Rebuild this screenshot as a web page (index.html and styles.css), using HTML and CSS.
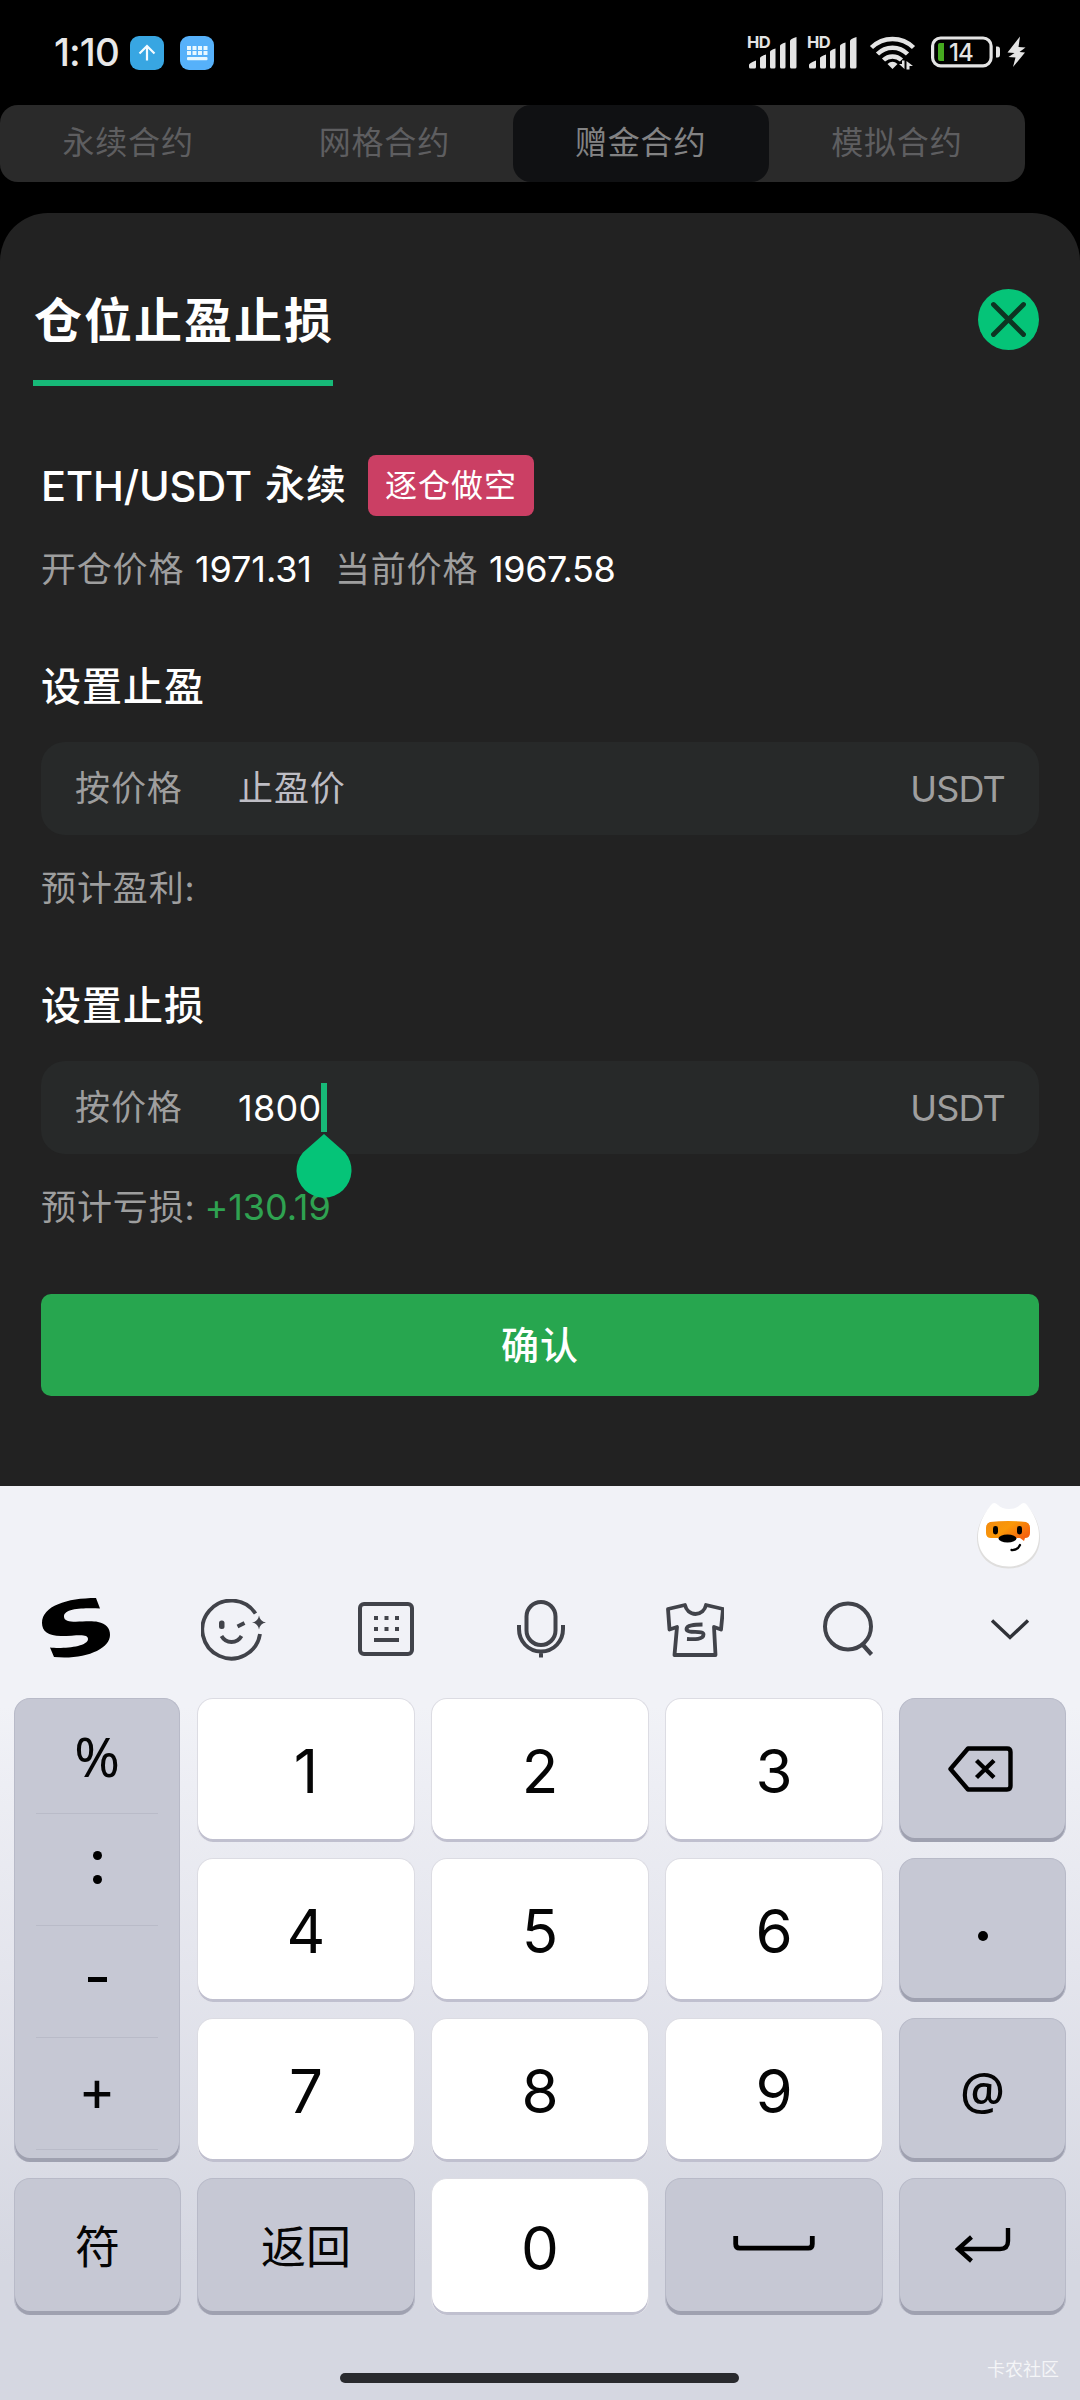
FILE: index.html
```html
<!DOCTYPE html>
<html lang="zh-CN">
<head>
<meta charset="utf-8">
<title>仓位止盈止损</title>
<link rel="stylesheet" href="styles.css">
</head>
<body>
<div class="screen">
  <header class="status">
    <span class="clock">1:10</span>
    <svg class="app-badge" viewBox="0 0 34 34"><rect width="34" height="34" rx="9" fill="#38a6e2"/><path d="M17 24.500V10M9.500 17.500L17 10l7.500 7.500" fill="none" stroke="#f4fbff" stroke-width="2.200"/></svg>
    <svg class="app-badge second" viewBox="0 0 34 34"><rect width="34" height="34" rx="9" fill="#56b1fa"/><g fill="#e8f8ff"><path d="M7 10h4v4H7zM12.500 10h4v4h-4zM18 10h4v4h-4zM23.500 10h4v4h-4zM7 15h4v4H7zM12.500 15h4v4h-4zM18 15h4v4h-4zM23.500 15h4v4h-4z"/><rect x="7" y="21" width="20.500" height="3.200" rx="1"/></g></svg>
    <svg class="indicators" viewBox="0 -4 280 44" fill="#e4e4e4">
      <g>
        <text class="hd" x="0" y="13">HD</text>
        <path d="M2 32v-2q0-2 7-4.500V32q0 1.500-1.500 1.500h-4Q2 33.500 2 32zM13 32V23q0-1.500 6-3.500V32q0 1.500-1.500 1.500h-3Q13 33.500 13 32zM23 32V17q0-2 5.500-3.500V32q0 1.500-1.500 1.500h-2.500Q23 33.500 23 32zM33 32V11q0-2 5.500-3.500V32q0 1.500-1.500 1.500h-2.500Q33 33.500 33 32zM43 32V6q0-2 6.500-4V32q0 1.500-1.500 1.500h-3.500Q43 33.500 43 32z"/>
      </g>
      <g transform="translate(60 0)">
        <text class="hd" x="0" y="13">HD</text>
        <path d="M2 32v-2q0-2 7-4.500V32q0 1.500-1.500 1.500h-4Q2 33.500 2 32zM13 32V23q0-1.500 6-3.500V32q0 1.500-1.500 1.500h-3Q13 33.500 13 32zM23 32V17q0-2 5.500-3.500V32q0 1.500-1.500 1.500h-2.500Q23 33.500 23 32zM33 32V11q0-2 5.500-3.500V32q0 1.500-1.500 1.500h-2.500Q33 33.500 33 32zM43 32V6q0-2 6.500-4V32q0 1.500-1.500 1.500h-3.500Q43 33.500 43 32z"/>
      </g>
      <g fill="none" stroke="#e4e4e4" stroke-width="4.500"><path d="M124.500 12.500a30 30 0 0 1 42 0"/><path d="M130.500 19a21 21 0 0 1 30 0"/><path d="M136.500 25a13 13 0 0 1 18 0"/></g>
      <path d="M145.500 34l-5-5q5-4.500 10 0z"/>
      <path d="M155 25.500h2.500V34L152 29h3zM159.500 34.500V26l6.500 5h-3.500v3.500z"/>
      <rect x="185.600" y="3" width="58.500" height="27.800" rx="8" fill="none" stroke="#e4e4e4" stroke-width="3.200"/>
      <path d="M249 11.500h1.500q2.500 0 2.500 3v5q0 3-2.500 3H249z"/>
      <path d="M193 8h4v18h-4q-2 0-2-2V10q0-2 2-2z" fill="#45a91f"/>
      <text class="percent" x="202" y="26">14</text>
      <path d="M273 1.500L260.500 17.500l7 .500-6 4 7 .500L266 32 278 17.500l-5.500-.500 6-4.500-7-.500z"/>
    </svg>
  </header>

  <nav class="tabs"><span>永续合约</span><span>网格合约</span><span class="active">赠金合约</span><span>模拟合约</span></nav>

  <main class="sheet">
    <div class="sheet-head">
      <h1>仓位止盈止损</h1>
      <svg class="close" viewBox="0 0 61 61"><circle cx="30.500" cy="30.500" r="30.500" fill="#05c478"/><path d="M15.500 15.500l30 30M45.500 15.500l-30 30" stroke="#0d3422" stroke-width="4.900" stroke-linecap="round"/></svg>
    </div>
    <div class="pair"><span class="symbol">ETH/USDT</span><span class="perp">永续</span><span class="side">逐仓做空</span></div>
    <div class="prices"><span class="muted">开仓价格</span><b class="open">1971.31</b><span class="muted">当前价格</span><b>1967.58</b></div>

    <section class="take">
      <h2>设置止盈</h2>
      <div class="field"><span class="mode">按价格</span><span class="placeholder">止盈价</span><span class="unit">USDT</span></div>
      <p class="estimate">预计盈利:</p>
    </section>

    <section class="stop">
      <h2>设置止损</h2>
      <div class="field"><span class="mode">按价格</span><span class="value">1800<i class="caret"></i><svg class="handle" viewBox="0 0 56 66"><path d="M28 1L49 19.500A27.500 27.500 0 1 1 7 19.500z" fill="#05c478"/></svg></span><span class="unit">USDT</span></div>
      <p class="estimate">预计亏损:<span class="gain">+130.19</span></p>
    </section>
    <button class="confirm">确认</button>
  </main>

  <footer class="keyboard">
    <div class="assistant">
      <svg class="mascot" viewBox="0 0 70 76">
        <defs>
          <linearGradient id="mask" x1="0" y1="0" x2="1" y2=".6"><stop offset="0" stop-color="#f28a10"/><stop offset=".5" stop-color="#fa9808"/><stop offset="1" stop-color="#f4620e"/></linearGradient>
        </defs>
        <path d="M18 5q3-4 7 0 4 4 11 4t11-4q4-4 7 0c9 10 13 21 13 32C67 56 53 67.500 35.500 67.500S4 56 4 37C4 26 9 15 18 5z" fill="#dfdedd"/>
        <path d="M18 4q3-4 7 0 4 4 11 4t11-4q4-4 7 0c8 10 12 21 12 31C66 54 52 65.500 35.500 65.500S5 54 5 36C5 25 10 14 18 4z" fill="#fff"/>
        <path d="M17 21q18-2 36 0 4 1 4 6v5q0 5-5 5l-1 3-4-3H18q-5 0-5-5v-5q0-5 4-6z" fill="url(#mask)"/>
        <rect x="20" y="25" width="5" height="8.500" rx="2.400"/><rect x="44" y="25" width="5" height="8.500" rx="2.400"/>
        <ellipse cx="34.500" cy="37.500" rx="9" ry="4"/><path d="M38.500 49q6 .5 8.500-5" fill="none" stroke="#000" stroke-width="2.300" stroke-linecap="round"/>
      </svg>
    </div>
    <div class="toolbar">
      <svg class="t-logo" viewBox="0 0 68 60"><path d="M54 0l4 10.500C43 10 22 10 22 18.500c0 9 22 3 34 5.500 8 1.700 12 6 12 13C68 51 43 62 12 59L8 49.500C20 51 46 49 46 41c0-6-12-3-27-3C6 38 0 33 0 25 0 8 25 0 54 0z"/></svg>
      <svg class="t-smile" viewBox="0 0 66 62"><g fill="none" stroke="#41434a" stroke-width="3.800"><path d="M54.500 14.500A29 29 0 1 0 59 35"/><path d="M20.500 37c4.500 8 15.500 8 20 0"/></g><rect x="18" y="21.500" width="5.500" height="8.500" rx="2.500" fill="#41434a"/><path d="M36.500 27.500l7-3.500" stroke="#41434a" stroke-width="4"/><path d="M58 16.500q1 6 7 7-6 1-7 7-1-6-7-7 6-1 7-7z" fill="#41434a"/></svg>
      <svg class="t-keys" viewBox="0 0 56 54"><rect x="2" y="2" width="52" height="50" rx="4" fill="none" stroke="#41434a" stroke-width="4"/><path d="M16 14h4v4h-4zM26.500 14h4v4h-4zM37 14h4v4h-4zM16 25h4v4h-4zM26.500 25h4v4h-4zM37 25h4v4h-4zM16 36h25v4H16z" fill="#41434a"/></svg>
      <svg class="t-mic" viewBox="0 0 48 58"><g fill="none" stroke="#41434a" stroke-width="4"><rect x="9.500" y="2" width="29" height="43" rx="14.500"/><path d="M2 25v4c0 12 9 22.500 22 22.500S46 41 46 29v-4M24 51v6.500"/></g></svg>
      <svg class="t-shirt" viewBox="0 0 58 54"><g fill="none" stroke="#41434a" stroke-width="3.800" stroke-linejoin="round"><path d="M19 2L2 6l1.500 20.500L11 24 8.500 52h41L48 24l7 2.500L57 6 40 2c-1 5-5 9-10.500 9S20 7 19 2z"/><path d="M36.500 21.500c-8 0-16 .5-16 4.500 0 5 17 1 17 5.500 0 5-9 5-16.500 4.500"/></g></svg>
      <svg class="t-search" viewBox="0 0 52 56"><g fill="none" stroke="#41434a" stroke-width="4"><circle cx="25" cy="25.500" r="23"/><path d="M40 44l8.500 9.500" stroke-width="4.200"/></g></svg>
      <svg class="t-down" viewBox="0 0 40 24"><path d="M2 2.500l18 17 18-17" fill="none" stroke="#303238" stroke-width="3.400"/></svg>
    </div>
    <div class="keys">
      <div class="symbols key gray"><span class="pct">%</span><span class="colon"><i></i><i></i></span><span class="minus"><i></i></span><span class="plus">+</span></div>
      <div class="key">1</div><div class="key">2</div><div class="key">3</div>
      <div class="key gray"><svg class="backspace" viewBox="0 0 65 46"><path d="M20 2.500h39q3.500 0 3.500 3.500v34q0 3.500-3.500 3.500H20L2.500 23z" fill="none" stroke="#000" stroke-width="4.400" stroke-linejoin="round"/><path d="M28.500 14.500L46 31.500M46 14.500L28.500 31.500" stroke="#000" stroke-width="4.400"/></svg></div>
      <div class="key">4</div><div class="key">5</div><div class="key">6</div><div class="key gray"><i class="point"></i></div>
      <div class="key">7</div><div class="key">8</div><div class="key">9</div><div class="key gray at">@</div>
      <div class="key gray han">符</div><div class="key gray han">返回</div><div class="key">0</div>
      <div class="key gray"><svg class="space" viewBox="0 0 82 15"><path d="M2.700 0v8q0 4.200 4 4.200h68.600q4 0 4-4.200V0" fill="none" stroke="#000" stroke-width="4.800"/></svg></div>
      <div class="key gray"><svg class="enter" viewBox="0 0 56 36"><path d="M53 0v13q0 8-8 8H3M16.500 9L3 21l13.500 12" fill="none" stroke="#000" stroke-width="4.400"/></svg></div>
    </div>
    <div class="home"></div>
    <span class="watermark">卡农社区</span>
  </footer>
</div>
</body>
</html>
```
FILE: styles.css
```css
* { box-sizing: border-box; }
body { margin: 0; background: #000; font-family: Inter, "Noto Sans CJK SC", sans-serif; }
svg { display: block; flex: none; }
h1, h2, p { margin: 0; }
.screen { width: 1080px; height: 2400px; display: flex; flex-direction: column; overflow: hidden; }

.status { height: 105px; display: flex; align-items: center; padding-left: 54px; }
.clock { width: 76px; font-size: 38.500px; font-weight: 500; line-height: 105px; letter-spacing: -.900px; color: #e8e8e8; white-space: nowrap; }
.app-badge { width: 34px; height: 34px; }
.app-badge.second { margin-left: 16px; }
.indicators { width: 280px; height: 44px; margin-left: 533px; overflow: visible; }
.hd { font-size: 16.500px; font-weight: 700; letter-spacing: -.5px; }
.percent { font-size: 24px; font-weight: 500; letter-spacing: -1px; }

.tabs { display: grid; grid-template-columns: repeat(4, 1fr); width: 1025px; height: 77px; border-radius: 18px; background: #2a2a2a; overflow: hidden; }
.tabs span { text-align: center; font-size: 32px; letter-spacing: .8px; line-height: 75px; color: #5e5e60; }
.tabs .active { background: #101113; border-radius: 18px; color: #838384; }

.sheet { margin-top: 31px; height: 1273px; flex: none; padding: 63px 41px 0; border-radius: 48px 48px 0 0; background: #222; color: #fff; }
.sheet-head { display: flex; justify-content: space-between; margin-left: -8px; height: 110px; }
h1 { height: 110px; width: 300px; border-bottom: 6px solid #17b978; font-size: 48px; font-weight: 700; line-height: 89px; letter-spacing: 2px; white-space: nowrap; padding-left: 1px; }
.close { width: 61px; height: 61px; margin-top: 13px; }
.pair { display: flex; align-items: center; height: 61px; margin-top: 69px; white-space: nowrap; }
.symbol { width: 224px; font-size: 41.500px; font-weight: 500; letter-spacing: -.1px; }
.perp { width: 103px; font-size: 40px; font-weight: 500; line-height: 61px; height: 63px; letter-spacing: 1px; }
.side { width: 166px; height: 61px; border-radius: 8px; background: #cb3f64; text-align: center; font-size: 32px; letter-spacing: 1px; line-height: 61px; }
.prices { display: flex; height: 50px; margin-top: 28px; line-height: 50px; font-size: 35px; letter-spacing: .8px; white-space: nowrap; }
.prices span { width: 153px; }
.prices b { margin-left: 1px; font-size: 36px; font-weight: 400; letter-spacing: -.4px; }
.prices .open { width: 140px; letter-spacing: -.1px; }
.muted, .estimate, .mode, .unit { color: #9e9e9e; }
.take { margin-top: 63px; }
.stop { margin-top: 64px; }
h2 { height: 60px; font-size: 40px; font-weight: 500; line-height: 60px; letter-spacing: 1px; }
.field { display: flex; align-items: center; height: 93px; margin-top: 25px; padding: 0 34px; border-radius: 24px; background: #272929; font-size: 35px; letter-spacing: .9px; line-height: 92px; }
.mode { width: 163px; }
.placeholder { color: #bebdc4; }
.field .mode, .placeholder { height: 94px; }
.value { position: relative; font-size: 36px; letter-spacing: .3px; line-height: 50px; height: 50px; }
.caret { position: absolute; left: 83px; top: 0; width: 6px; height: 49px; background: #17b978; }
.handle { position: absolute; left: 58px; top: 50px; width: 56px; height: 66px; z-index: 2; }
.unit { margin-left: auto; font-size: 36px; letter-spacing: -.8px; }
.estimate { height: 50px; margin-top: 27px; font-size: 35px; line-height: 52px; letter-spacing: .9px; }
.gain { margin-left: 9px; color: #2fa251; font-size: 36px; letter-spacing: -.1px; }
.confirm { display: block; width: 100%; height: 102px; margin-top: 63px; padding: 0; border: 0; border-radius: 10px; background: #27a64f; color: #fff; font: 500 38px/102px Inter, "Noto Sans CJK SC", sans-serif; letter-spacing: 1px; }

.keyboard { position: relative; height: 914px; flex: none; background: linear-gradient(#f1f2f7 0 220px, #e4e5ed 480px, #d5d7e1 780px); }
.assistant { height: 98px; padding: 15px 0 0 973px; }
.mascot { width: 70px; height: 76px; }
.toolbar { display: flex; align-items: center; height: 90px; padding-left: 42px; }
.t-logo { width: 68px; height: 60px; margin-top: -2px; }
.t-smile { width: 66px; height: 62px; margin: 1px 0 0 91px; }
.t-keys { width: 56px; height: 54px; margin-left: 91px; }
.t-mic { width: 48px; height: 58px; margin-left: 103px; }
.t-shirt { width: 58px; height: 54px; margin: 2px 0 0 101px; }
.t-search { width: 52px; height: 56px; margin-left: 99px; }
.t-down { width: 40px; height: 24px; margin: 2px 0 0 115px; }
.keys { display: grid; grid-template-columns: 167px 218px 218px 218px 167px; grid-template-rows: 144px 144px 144px 137px; gap: 16px; padding: 24px 14px 0; }
.key { display: flex; align-items: center; justify-content: center; padding-top: 1px; border: solid #dcdce3; border-width: 1px 1px 0; border-radius: 16px; background: #fff; box-shadow: inset 0 -3px #c0c0cf; font-family: Inter, "Noto Sans CJK SC", sans-serif; font-size: 60px; color: #050505; }
.gray { background: #c6c8d4; border-color: #b8bac8; box-shadow: inset 0 -4px #9fa1b0; }
.symbols { grid-row: span 3; display: grid; grid-template-rows: repeat(4, 112px); align-content: start; align-items: stretch; justify-content: center; padding-top: 3px; width: 166px; }
.symbols span { width: 122px; display: flex; align-items: center; justify-content: center; padding-bottom: 4px; border-bottom: 1px solid #b9bbc8; }
.symbols .pct { font-family: "Noto Sans", sans-serif; font-size: 55px; }
.symbols .colon { flex-direction: column; gap: 15px; }
.colon i { width: 9px; height: 9px; border-radius: 50%; background: #000; }
.minus i { width: 19px; height: 5px; background: #000; }
.symbols .plus { font-family: "Noto Sans", sans-serif; font-size: 56px; font-weight: 500; }
.point { width: 10px; height: 10px; margin-top: 10px; border-radius: 50%; background: #000; }
.at { font-family: "Noto Sans", sans-serif; font-size: 50px; font-weight: 500; padding-bottom: 3px; }
.han { font-size: 45px; padding-bottom: 6px; }
.backspace { width: 65px; height: 46px; margin: -4px 0 0 -5px; }
.space { width: 82px; height: 15px; margin-top: -8px; }
.enter { width: 56px; height: 36px; margin-top: -4px; }
.home { width: 399px; height: 10px; margin: 58px 0 0 340px; border-radius: 5px; background: #292a2e; }
.watermark { position: absolute; right: 21px; bottom: 16px; font-size: 18px; line-height: 28px; color: rgba(255,255,255,.75); }
```
